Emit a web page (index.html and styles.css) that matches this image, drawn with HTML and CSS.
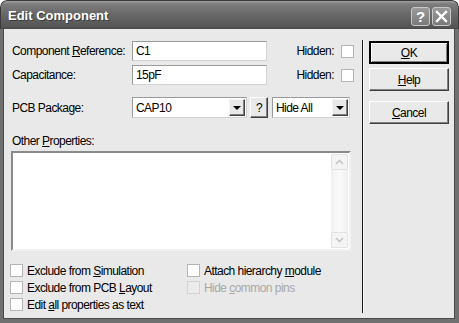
FILE: index.html
```html
<!DOCTYPE html>
<html lang="en">
<head>
    <meta charset="UTF-8">
    <title>Edit Component</title>
    <link rel="stylesheet" href="styles.css">
</head>
<body>
    <div class="window">
        <div class="titlebar">
            <span class="title">Edit Component</span>
            <div class="caption-btns">
                <span class="cap-btn">?</span>
                <span class="cap-btn">
                    <svg width="13" height="13" viewBox="0 0 13 13">
                        <path d="M2 2 L11 11 M11 2 L2 11" stroke="#fff" stroke-width="2.4" stroke-linecap="square"/>
                    </svg>
                </span>
            </div>
        </div>

        <div class="client">
            <div class="main">
                <div class="fields">
                    <span class="lbl">Component <u>R</u>eference:</span>
                    <div class="edit">C1</div>
                    <span class="hidden-lbl">Hidden:</span>
                    <span class="check"></span>

                    <span class="lbl">Capacitance:</span>
                    <div class="edit">15pF</div>
                    <span class="hidden-lbl">Hidden:</span>
                    <span class="check"></span>
                </div>

                <div class="pkg-row">
                    <span class="lbl pkg-lbl">PCB Package:</span>
                    <div class="combo combo-pkg">
                        <span class="combo-text">CAP10</span>
                        <span class="drop"><i class="tri"></i></span>
                    </div>
                    <span class="qbtn">?</span>
                    <div class="combo combo-hide">
                        <span class="combo-text">Hide All</span>
                        <span class="drop"><i class="tri"></i></span>
                    </div>
                </div>

                <div class="other-lbl">Other <u>P</u>roperties:</div>
                <div class="memo">
                    <div class="scrollbar">
                        <span class="sb-btn">
                            <svg width="9" height="6" viewBox="0 0 9 6"><path d="M1 5 L4.5 1.5 L8 5" fill="none" stroke="#c4c4c4" stroke-width="1.6"/></svg>
                        </span>
                        <span class="sb-btn">
                            <svg width="9" height="6" viewBox="0 0 9 6"><path d="M1 1 L4.5 4.5 L8 1" fill="none" stroke="#c4c4c4" stroke-width="1.6"/></svg>
                        </span>
                    </div>
                </div>

                <div class="options">
                    <label class="opt"><span class="check"></span><span>Exclude from <u>S</u>imulation</span></label>
                    <label class="opt"><span class="check"></span><span>Attach hierarchy <u>m</u>odule</span></label>
                    <label class="opt"><span class="check"></span><span>Exclude from PCB <u>L</u>ayout</span></label>
                    <label class="opt disabled"><span class="check"></span><span>Hide <u>c</u>ommon pins</span></label>
                    <label class="opt"><span class="check"></span><span>Edit <u>a</u>ll properties as text</span></label>
                </div>
            </div>

            <div class="divider"></div>

            <div class="side">
                <span class="btn btn-default"><span><u>O</u>K</span></span>
                <span class="btn"><span><u>H</u>elp</span></span>
                <span class="btn btn-cancel"><span><u>C</u>ancel</span></span>
            </div>
        </div>
    </div>
</body>
</html>
```

FILE: styles.css
```css
:root {
    --face: #e9e9e9;
    --frame: #707070;
    --shadow: #808080;
    --dark: #404040;
}

* {
    box-sizing: border-box;
    margin: 0;
    padding: 0;
}

body {
    background: #fff;
    font-family: 'Liberation Sans', Arial, sans-serif;
    font-size: 12px;
    letter-spacing: -0.55px;
    color: #000;
}

u {
    text-decoration: underline;
    text-underline-offset: 1px;
}

.window {
    width: 459px;
    height: 323px;
    display: flex;
    flex-direction: column;
    border-radius: 7px 7px 0 0;
    overflow: hidden;
    background: var(--face);
}

/* title bar */
.titlebar {
    height: 29px;
    flex: none;
    display: flex;
    align-items: center;
    justify-content: space-between;
    padding: 0 6px 0 7px;
    background: linear-gradient(#a2a2a2 0, #7d7d7d 3px, #6a6a6a 12px, #555 26px, #3e3e3e 29px);
    border: 1px solid #3a3a3a;
    border-bottom: none;
    border-radius: 7px 7px 0 0;
}

.title {
    font-weight: bold;
    font-size: 13px;
    letter-spacing: 0;
    color: #fff;
    text-shadow: 1px 1px 0 #3a3a3a;
    padding-top: 1px;
}

.caption-btns {
    display: flex;
    gap: 2px;
    padding-top: 3px;
    margin-right: 1px;
}

.cap-btn {
    width: 19px;
    height: 19px;
    display: flex;
    align-items: center;
    justify-content: center;
    border: 1px solid #c8c8c8;
    border-radius: 3px;
    background: linear-gradient(#9a9a9a, #7a7a7a);
    color: #fff;
    font-weight: bold;
    font-size: 15px;
    letter-spacing: 0;
}

/* client area */
.client {
    flex: 1;
    display: flex;
    border-left: 3px solid var(--frame);
    border-right: 4px solid var(--frame);
    border-bottom: 4px solid var(--frame);
    box-shadow: inset 1px 0 #4a4a4a, inset -1px -1px #4a4a4a;
}

.main {
    width: 359px;
    padding: 12px 8px 0 8px;
}

.fields {
    display: grid;
    grid-template-columns: 121px 135px 1fr 13px;
    grid-auto-rows: 20px;
    row-gap: 4px;
    align-items: center;
}

.lbl {
    padding-left: 1px;
    white-space: nowrap;
}

.edit {
    height: 20px;
    background: #fff;
    border: 1px solid;
    border-color: #9a9a9a #d2d2d2 #d2d2d2 #9a9a9a;
    padding: 2px 3px;
    line-height: 14px;
}

.hidden-lbl {
    text-align: right;
    padding-right: 7px;
}

.check {
    width: 13px;
    height: 13px;
    flex: none;
    background: #fff;
    border: 1px solid #b4b4b4;
    display: inline-block;
}

.pkg-row {
    display: flex;
    align-items: center;
    margin-top: 12px;
    height: 21px;
}

.pkg-lbl {
    width: 121px;
}

.combo {
    height: 21px;
    display: flex;
    align-items: center;
    background: #fff;
    border: 1px solid;
    border-color: #9a9a9a #d2d2d2 #d2d2d2 #9a9a9a;
    padding: 1px;
}

.combo-pkg {
    width: 115px;
}

.combo-hide {
    width: 78px;
    margin-left: 4px;
}

.combo-text {
    flex: 1;
    padding-left: 2px;
}

.drop {
    width: 16px;
    height: 17px;
    display: flex;
    align-items: center;
    justify-content: center;
    background: var(--face);
    border: 1px solid;
    border-color: #f4f4f4 var(--dark) var(--dark) #f4f4f4;
    box-shadow: inset -1px -1px var(--shadow);
}

.tri {
    width: 0;
    height: 0;
    border-left: 4px solid transparent;
    border-right: 4px solid transparent;
    border-top: 4px solid #000;
}

.qbtn {
    width: 18px;
    height: 21px;
    margin-left: 3px;
    display: flex;
    align-items: center;
    justify-content: center;
    background: var(--face);
    border: 1px solid;
    border-color: #fff var(--dark) var(--dark) #fff;
    box-shadow: inset -1px -1px var(--shadow);
}

.other-lbl {
    margin-top: 16px;
    padding-left: 1px;
    line-height: 14px;
}

.memo {
    width: 340px;
    height: 100px;
    margin-top: 3px;
    background: #fff;
    border: 2px solid;
    border-color: #8a8a8a #f2f2f2 #f2f2f2 #8a8a8a;
    display: flex;
    justify-content: flex-end;
    padding: 1px;
}

.scrollbar {
    width: 17px;
    display: flex;
    flex-direction: column;
    justify-content: space-between;
    background: linear-gradient(90deg, #f0f0f0, #fbfbfb 50%, #eeeeee);
}

.sb-btn {
    height: 16px;
    display: flex;
    align-items: center;
    justify-content: center;
    border: 1px solid #e2e2e2;
    border-radius: 2px;
    background: #f4f4f4;
}

.options {
    display: grid;
    grid-template-columns: 177px 1fr;
    grid-auto-rows: 17px;
    margin-top: 11px;
    margin-left: -1px;
}

.opt {
    display: flex;
    align-items: center;
    gap: 4px;
    white-space: nowrap;
}

.opt.disabled {
    color: #a8a8a8;
}

.opt.disabled .check {
    background: #ececec;
    border-color: #d4d4d4;
}

.divider {
    width: 2px;
    margin: 11px 0 6px 0;
    border-left: 1px solid #1a1a1a;
    border-right: 1px solid #fafafa;
}

.side {
    flex: 1;
    display: flex;
    flex-direction: column;
    padding: 12px 0 0 5px;
    gap: 4px;
}

.btn {
    width: 80px;
    height: 23px;
    display: flex;
    align-items: center;
    justify-content: center;
    background: var(--face);
    border: 1px solid;
    border-color: #fff var(--dark) var(--dark) #fff;
    box-shadow: inset -1px -1px var(--shadow);
}

.btn-default {
    border: 2px solid #000;
    box-shadow: inset 1px 1px #fff, inset -1px -1px var(--shadow);
}

.btn-cancel {
    margin-top: 6px;
}
```
